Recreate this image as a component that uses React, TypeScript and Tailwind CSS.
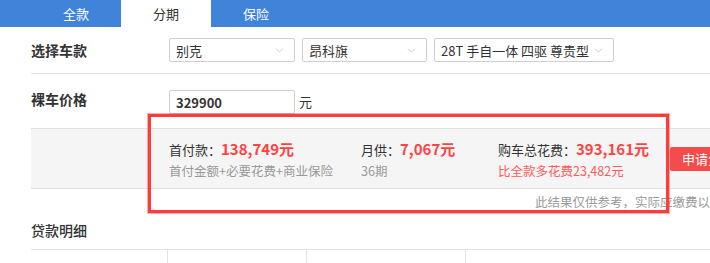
import React from "react";
import { ChevronDown } from "lucide-react";

function Select({ value, width }: { value: string; width: string }) {
  return (
    <div
      className={`${width} h-[24px] border border-[#cfcfcf] rounded-[2px] bg-white flex items-center justify-between pl-[6px] pr-[8px]`}
    >
      <span className="text-[13px] leading-none text-[#333]">{value}</span>
      <ChevronDown size={13} strokeWidth={1.2} className="text-[#b5b5b5]" />
    </div>
  );
}

export default function App() {
  return (
    <div className="relative w-[710px] h-[263px] overflow-hidden bg-white font-['Microsoft_YaHei','Noto_Sans_CJK_SC',sans-serif] text-[#333]">
      {/* TABS */}
      <div className="h-[27px] bg-[#3f84d9] flex pl-[31px]">
        <div className="w-[90px] flex items-center justify-center text-[13px] text-white">全款</div>
        <div className="w-[90px] flex items-center justify-center text-[13px] text-[#333] bg-white">分期</div>
        <div className="w-[90px] flex items-center justify-center text-[13px] text-white">保险</div>
      </div>

      <div className="pl-[31px]">
        {/* 选择车款 */}
        <div className="flex items-center h-[47px] border-b border-[#e3e3e3]">
          <div className="w-[138px] text-[14px] font-bold leading-none">选择车款</div>
          <div className="flex gap-[7px]">
            <Select value="别克" width="w-[126px]" />
            <Select value="昂科旗" width="w-[125px]" />
            <Select value="28T 手自一体 四驱 尊贵型" width="w-[180px]" />
          </div>
        </div>

        {/* 裸车价格 */}
        <div className="flex items-start h-[54px] pt-[16px]">
          <div className="w-[138px] text-[14px] font-bold leading-none pt-[2px]">裸车价格</div>
          <div className="w-[126px] h-[24px] border border-[#cfcfcf] rounded-[2px] flex items-center pl-[6px] text-[13px] font-bold leading-none">
            329900
          </div>
          <span className="ml-[4px] text-[13px] leading-[24px]">元</span>
        </div>

        {/* RESULT BAND */}
        <div className="h-[61px] bg-[#f5f5f5] border-y border-[#e0e0e0] flex items-center pl-[138px] overflow-hidden">
          <div className="w-[192px] shrink-0 flex flex-col gap-[9px] pt-[1px]">
            <div className="flex items-baseline text-[13px] leading-none">
              首付款：<span className="text-[15px] font-bold text-[#ff4343]">138,749元</span>
            </div>
            <div className="text-[12.5px] leading-none text-[#999]">首付金额+必要花费+商业保险</div>
          </div>
          <div className="w-[137px] shrink-0 flex flex-col gap-[9px] pt-[1px]">
            <div className="flex items-baseline text-[13px] leading-none">
              月供：<span className="text-[15px] font-bold text-[#ff4343]">7,067元</span>
            </div>
            <div className="text-[12.5px] leading-none text-[#999]">36期</div>
          </div>
          <div className="w-[172px] shrink-0 flex flex-col gap-[9px] pt-[1px]">
            <div className="flex items-baseline text-[13px] leading-none">
              购车总花费：<span className="text-[15px] font-bold text-[#ff4343]">393,161元</span>
            </div>
            <div className="text-[12.5px] leading-none text-[#ff5a5a]">比全款多花费23,482元</div>
          </div>
          <div className="h-[24px] w-[80px] shrink-0 bg-[#f44c4c] rounded-[2px] flex items-center pl-[12px] text-[13px] text-white whitespace-nowrap">
            申请分期
          </div>
        </div>

        {/* NOTE */}
        <div className="h-[26px] flex items-center pl-[504px] whitespace-nowrap overflow-hidden">
          <span className="text-[12.5px] leading-none text-[#999]">此结果仅供参考，实际应缴费以当地为准</span>
        </div>

        {/* 贷款明细 */}
        <div className="h-[34px] flex items-center pb-[5px]">
          <span className="text-[14px] font-medium leading-none">贷款明细</span>
        </div>

        <div className="h-[14px] border-t border-[#e3e3e3] flex">
          <div className="w-[137px] border-r border-[#e3e3e3]" />
          <div className="w-[139px] border-r border-[#e3e3e3]" />
          <div className="w-[159px] border-r border-[#e3e3e3]" />
        </div>
      </div>

      {/* ANNOTATION BOX */}
      <div className="absolute left-[148px] top-[114px] w-[521px] h-[99px] border-[3px] border-[#ff3c3c] shadow-[0_0_0_1px_rgba(255,70,70,0.45)] pointer-events-none" />
    </div>
  );
}
